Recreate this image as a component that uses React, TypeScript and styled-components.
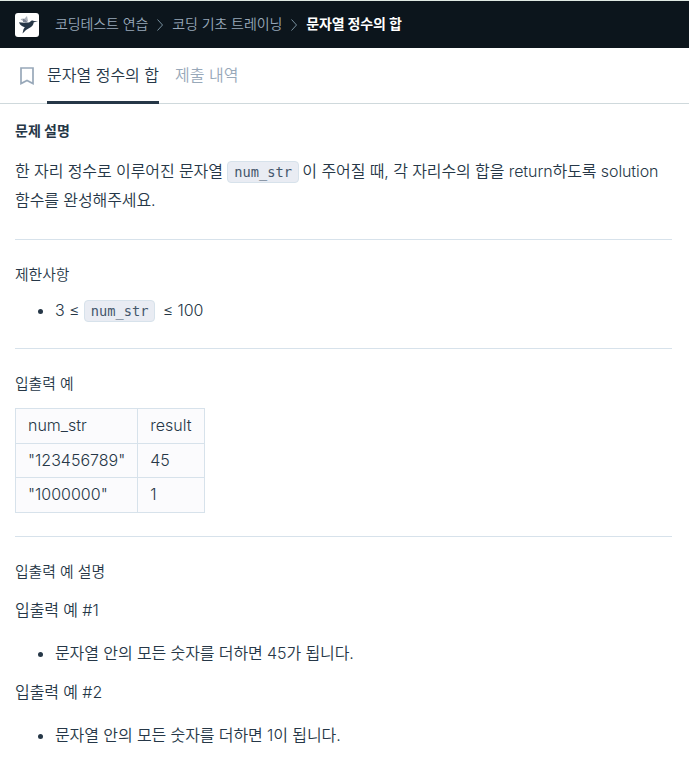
import React from 'react';
import styled, { createGlobalStyle } from 'styled-components';

const GlobalStyle = createGlobalStyle`
  * { box-sizing: border-box; }
  body {
    margin: 0;
    background: #fff;
    color: #263747;
    font-family: Inter, "Noto Sans CJK KR", sans-serif;
    font-size: 16px;
  }
`;

const Page = styled.div`
  min-height: 770px;
  background: #fff;
`;

const Header = styled.header`
  display: flex;
  align-items: center;
  height: 48px;
  padding: 0 15px;
  border-top: 1px solid #dfe9e2;
  background: #0c151c;
`;

const Logo = styled.svg`
  display: block;
  width: 24px;
  height: 24px;
  margin: 1px 16px 0 0;
`;

const Crumb = styled.span<{ $current?: boolean }>`
  margin-top: -1px;
  font-size: 14px;
  line-height: 20px;
  font-weight: ${(p) => (p.$current ? 700 : 350)};
  color: ${(p) => (p.$current ? '#fff' : '#98a8b9')};
  letter-spacing: ${(p) => (p.$current ? '-0.15px' : '-0.1px')};
  white-space: nowrap;
`;

const Chevron = styled.svg`
  width: 8px;
  height: 14px;
  margin: 1px 8px 0;
  fill: none;
  stroke: #78909f;
`;

const TabBar = styled.nav`
  display: flex;
  height: 56px;
  padding-left: 19px;
  border-bottom: 1px solid #cfd9dc;
`;

const Bookmark = styled.svg`
  width: 16px;
  height: 20px;
  margin: 18px 12px 0 0;
  fill: none;
  stroke: #98a8b9;
  stroke-width: 1.7;
`;

const Tab = styled.a<{ $active?: boolean }>`
  height: 56px;
  margin-right: 16px;
  border-bottom: 3px solid ${(p) => (p.$active ? '#263747' : 'transparent')};
  color: ${(p) => (p.$active ? '#263747' : '#98a8b9')};
  font-weight: 350;
  line-height: 54px;
  white-space: nowrap;
`;

const Content = styled.main`
  padding: 16px 17px 0 15px;
  font-weight: 350;
`;

const Heading = styled.h2<{ $strong?: boolean }>`
  margin: 0;
  font-size: ${(p) => (p.$strong ? 14 : 14.8)}px;
  line-height: 21px;
  font-weight: ${(p) => (p.$strong ? 700 : 350)};
`;

const Paragraph = styled.p<{ $top: number }>`
  margin: ${(p) => p.$top}px 0 0;
  letter-spacing: -0.09px;
  line-height: 29px;
`;

const Divider = styled.hr<{ $top: number }>`
  height: 1px;
  margin: ${(p) => p.$top}px 0 25px;
  border: 0;
  background: #d7e2eb;
`;

const List = styled.ul<{ $top: number }>`
  margin: ${(p) => p.$top}px 0 0;
  padding-left: 40px;
  letter-spacing: -0.1px;
  line-height: 28px;
`;

const Code = styled.code<{ $gap: number }>`
  display: inline-block;
  height: 22px;
  margin-right: ${(p) => p.$gap}px;
  padding: 0 6px;
  border: 1px solid #d7e2eb;
  border-radius: 4px;
  background: #e9ecf3;
  color: #44576c;
  font-family: "DejaVu Sans Mono", monospace;
  font-size: 13.7px;
  letter-spacing: 0;
  line-height: 20px;
`;

const Table = styled.table`
  margin-top: 13px;
  border-collapse: collapse;
  background: #fbfbfd;

  td {
    height: 34.5px;
    padding: 0 12px 1px;
    border: 1px solid #d7e2eb;
    line-height: 24px;
  }

  td:last-child {
    padding-right: 13px;
  }
`;

const rows = [
  ['num_str', 'result'],
  ['"123456789"', '45'],
  ['"1000000"', '1'],
];

const Separator = () => (
  <Chevron viewBox="0 0 8 14">
    <path d="M1.500 1.500 6.500 7l-5 5.500" />
  </Chevron>
);

export default function App() {
  return (
    <Page>
      <GlobalStyle />
      <Header>
        <Logo viewBox="0 0 24 24">
          <rect width="24" height="24" rx="3" fill="#fff" />
          <path d="M5.500 6.500 7 5.500l2 .5 3-3 1 5-2 2z" fill="#abb1bb" />
          <path d="m8 5.500 2.500 1.500 2.500 3-5-1z" fill="#7b8493" />
          <path
            d="M4 9.300l7.500.6 3-.6 1.800-1.500c1-.5 2-.4 2.700.3l4 .5-4.200.6c-.5 2.800-2 5-5.300 6.200L11 17l-3.500 3.500 1-4.200 1.300-2.100C7 13.700 5 12.200 4 9.300z"
            fill="#263747"
          />
        </Logo>
        <Crumb>코딩테스트 연습</Crumb>
        <Separator />
        <Crumb>코딩 기초 트레이닝</Crumb>
        <Separator />
        <Crumb $current>문자열 정수의 합</Crumb>
      </Header>
      <TabBar>
        <Bookmark viewBox="0 0 16 20">
          <path d="M2 2h12v15.500l-6-3-6 3z" />
        </Bookmark>
        <Tab $active>문자열 정수의 합</Tab>
        <Tab>제출 내역</Tab>
      </TabBar>
      <Content>
        <Heading $strong>문제 설명</Heading>
        <Paragraph $top={16}>
          한 자리 정수로 이루어진 문자열 <Code $gap={-1}>num_str</Code> 이 주어질 때, 각 자리수의 합을 return하도록 solution
          함수를 완성해주세요.
        </Paragraph>
        <Divider $top={24} />
        <Heading>제한사항</Heading>
        <List $top={10}>
          <li>
            3 ≤ <Code $gap={3}>num_str</Code> ≤ 100
          </li>
        </List>
        <Divider $top={24} />
        <Heading>입출력 예</Heading>
        <Table>
          <tbody>
            {rows.map((row) => (
              <tr key={row[0]}>
                {row.map((cell) => (
                  <td key={cell}>{cell}</td>
                ))}
              </tr>
            ))}
          </tbody>
        </Table>
        <Divider $top={23} />
        <Heading>입출력 예 설명</Heading>
        <Paragraph $top={13}>입출력 예 #1</Paragraph>
        <List $top={14}>
          <li>문자열 안의 모든 숫자를 더하면 45가 됩니다.</li>
        </List>
        <Paragraph $top={11}>입출력 예 #2</Paragraph>
        <List $top={14}>
          <li>문자열 안의 모든 숫자를 더하면 1이 됩니다.</li>
        </List>
      </Content>
    </Page>
  );
}
